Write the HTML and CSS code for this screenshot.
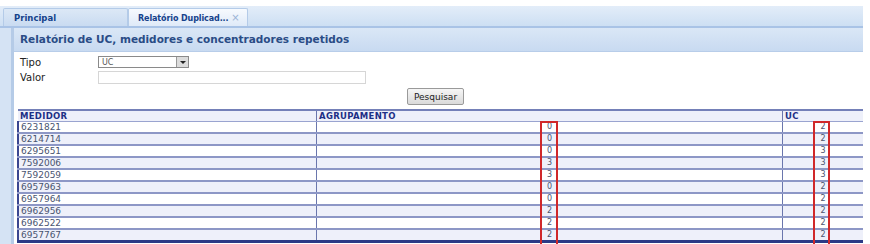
FILE: index.html
```html
<!DOCTYPE html>
<html>
  <head>
    <meta charset="utf-8" />
    <title>Relatório Duplicados</title>
    <link rel="stylesheet" href="styles.css">
  </head>
  <body>
    <div class="tabbar">
      <div class="tab">Principal</div>
      <div class="tab active">Relatório Duplicad... <span class="close">×</span></div>
    </div>

    <div class="main">
      <div class="side"></div>
      <div class="panel">
        <div class="panel-head">Relatório de UC, medidores e concentradores repetidos</div>

        <div class="form">
          <div class="field">
            <label>Tipo</label>
            <div class="select">
              <span>UC</span>
              <span class="arrow"></span>
            </div>
          </div>
          <div class="field">
            <label>Valor</label>
            <div class="input"></div>
          </div>
          <div class="actions">
            <button>Pesquisar</button>
          </div>
        </div>

        <div class="grid-wrap">
          <table class="grid">
            <thead>
              <tr>
                <th class="c1">MEDIDOR</th>
                <th class="c2">AGRUPAMENTO</th>
                <th class="c3">UC</th>
              </tr>
            </thead>
            <tbody>
              <tr><td>6231821</td><td class="num">0</td><td class="num">2</td></tr>
              <tr><td>6214714</td><td class="num">0</td><td class="num">2</td></tr>
              <tr><td>6295651</td><td class="num">0</td><td class="num">3</td></tr>
              <tr><td>7592006</td><td class="num">3</td><td class="num">3</td></tr>
              <tr><td>7592059</td><td class="num">3</td><td class="num">3</td></tr>
              <tr><td>6957963</td><td class="num">0</td><td class="num">2</td></tr>
              <tr><td>6957964</td><td class="num">0</td><td class="num">2</td></tr>
              <tr><td>6962956</td><td class="num">2</td><td class="num">2</td></tr>
              <tr><td>6962522</td><td class="num">2</td><td class="num">2</td></tr>
              <tr><td>6957767</td><td class="num">2</td><td class="num">2</td></tr>
            </tbody>
          </table>
          <!-- red highlight marks drawn over the grid -->
          <div class="mark mark-agr"></div>
          <div class="mark mark-uc"></div>
        </div>
      </div>
    </div>
  </body>
</html>
```

FILE: styles.css
```css
body {
  margin: 0;
  background: #fff;
  font-family: "DejaVu Sans", Verdana, sans-serif;
  color: #333;
  width: 863px;
  overflow: hidden;
}
.tabbar {
  margin-top: 6px;
  height: 20px;
  display: flex;
  align-items: flex-end;
  padding-left: 3px;
  background: linear-gradient(#e3edf9, #cddff3);
  border-bottom: 2px solid #a9c3e6;
}
.tab {
  height: 18px;
  line-height: 18px;
  font-size: 8.5px;
  font-weight: bold;
  color: #15428b;
  padding: 0 0 0 10px;
  box-sizing: border-box;
  white-space: nowrap;
  border: 1px solid #b4cbe8;
  border-bottom: none;
  border-radius: 2px 2px 0 0;
}
.tab:first-child {
  width: 125px;
  background: linear-gradient(#dce8f6, #c9dbf1);
}
.tab.active {
  width: 120px;
  font-size: 8px;
  letter-spacing: -0.1px;
  background: linear-gradient(#f7fafe, #dfeaf8);
  padding-left: 9px;
}
.close {
  color: #9bb3d6;
  font-weight: normal;
  font-size: 10px;
}
.main {
  display: flex;
}
.side {
  width: 11px;
  flex: none;
  background: #d5e3f4;
  border-right: 3px solid #b5cbe7;
  min-height: 220px;
}
.panel {
  flex: 1;
}
.panel-head {
  height: 23px;
  line-height: 23px;
  padding-left: 6px;
  font-size: 10.5px;
  font-weight: bold;
  color: #2a4c86;
  background: linear-gradient(#dae7f6, #c8daf1);
  border-bottom: 1px solid #b8cde9;
}
.form {
  padding: 3px 0 0 6px;
  font-size: 10px;
}
.field {
  display: flex;
  align-items: center;
  height: 14px;
  margin-bottom: 1px;
}
.field label {
  width: 78px;
  color: #222;
}
.select {
  width: 91px;
  height: 12px;
  border: 1px solid #8a8a8a;
  display: flex;
  justify-content: space-between;
  align-items: center;
  font-size: 8px;
  color: #555;
  padding-left: 3px;
  box-sizing: border-box;
  background: #fff;
}
.arrow {
  width: 11px;
  height: 10px;
  background: #dcdcdc;
  border-left: 1px solid #999;
  position: relative;
}
.arrow::after {
  content: "";
  position: absolute;
  left: 3px;
  top: 4px;
  border-left: 3px solid transparent;
  border-right: 3px solid transparent;
  border-top: 3px solid #222;
}
.input {
  width: 268px;
  height: 13px;
  border: 1px solid #d6d6d6;
  box-sizing: border-box;
  background: #fff;
}
.actions {
  display: flex;
  justify-content: center;
  padding: 3px 0 0 0;
}
button {
  height: 17px;
  width: 57px;
  padding: 0;
  font-family: "DejaVu Sans", Verdana, sans-serif;
  font-size: 9px;
  color: #222;
  background: linear-gradient(#f6f6f6, #dadada);
  border: 1px solid #9a9a9a;
  border-radius: 2px;
  margin-left: -12px;
}
.grid-wrap {
  position: relative;
  margin: 4px 0 0 3px;
  width: 846px;
}
.grid {
  width: 846px;
  border-collapse: collapse;
  table-layout: fixed;
  font-size: 9px;
  color: #4a5570;
}
.grid th {
  height: 10px;
  text-align: left;
  font-weight: bold;
  font-size: 8.5px;
  letter-spacing: 0.3px;
  color: #1c2f86;
  padding: 0 0 0 2px;
  background: #eef0fa;
  border-top: 2px solid #7480b8;
  border-bottom: 1px solid #9aa4d0;
  line-height: 10px;
}
.grid .c1 { width: 296px; }
.grid .c2 { width: 463px; }
.grid td {
  height: 10px;
  padding: 0 0 0 2px;
  line-height: 10px;
  border-bottom: 2px solid #8d97c6;
  white-space: nowrap;
}
.grid td + td {
  border-left: 1px solid #6a76ad;
}
.grid td.num {
  text-align: center;
  padding: 0;
  font-size: 8px;
}
.grid th + th {
  border-left: 1px solid #6a76ad;
}
.grid tr:nth-child(even) td {
  background: #eef0fa;
}
.grid tbody tr:last-child td {
  border-bottom: 3px solid #2c3a86;
}
.grid tr td:first-child {
  border-left: 2px solid #3a4690;
}
.mark {
  position: absolute;
  top: 12px;
  bottom: -3px;
  border: 2px solid #d0282a;
}
.mark-agr {
  left: 523px;
  width: 14px;
}
.mark-uc {
  left: 796px;
  width: 13px;
}
```
